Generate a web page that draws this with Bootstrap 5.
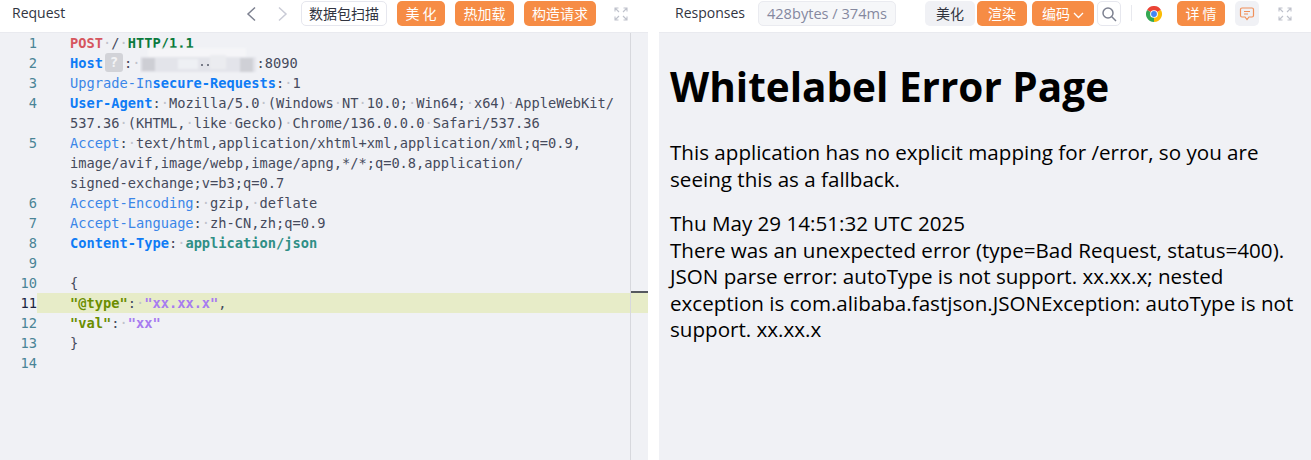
<!DOCTYPE html>
<html lang="zh-CN">
<head>
<meta charset="utf-8">
<title>Request</title>
<link href="https://cdn.jsdelivr.net/npm/bootstrap@5.3.0/dist/css/bootstrap.min.css" rel="stylesheet">
<style>
html,body{height:460px;overflow:hidden;background:#fff}
body{font-family:"Noto Sans","Noto Sans CJK SC",sans-serif;color:#2c3040}
.shell{height:460px}
.pane-l{width:648px;flex:none}
.pane-r{width:652px;flex:none;margin-left:11px}
.head-bar{height:33px;padding-top:1px;background:#fff;font-size:14px;border-bottom:1px solid #e9eaef}
.head-title{font-family:"Open Sans","Noto Sans CJK SC",sans-serif;font-size:14px;line-height:24px;color:#31343f}
.tbtn{height:25px;line-height:23px;border-radius:5px;font-size:14px;border:1px solid transparent;white-space:nowrap;font-family:"Noto Sans CJK SC",sans-serif;text-align:center;flex:none}
.tbtn-o{background:#f68c45;color:#fff}
.tbtn-w{background:#fff;border-color:#e6e7ee;color:#31343f}
.tbtn-g{background:#f0f1f5;color:#31343f}
.w86{width:86px}.w48{width:48px}.w59{width:59px}.w72{width:72px}.w50{width:50px}.w62{width:62px}
.gl10{margin-left:10px}.gl2{margin-left:2px}.gl5{margin-left:5px}.gl3{margin-left:3px}
.size-tag{height:25px;line-height:23px;border-radius:5px;border:1px solid #eaebf0;background:#f6f7f9;color:#85889f;font-size:14.6px;width:138px;text-align:center;margin-left:13px;font-family:"Open Sans",sans-serif}
.ico-btn{width:24px;height:25px;border-radius:5px;display:flex;align-items:center;justify-content:center;flex:none}
.ico-btn.tbtn-w{border:1px solid #e6e7ee}
.sep{width:1px;height:16px;background:#e8e9ee;margin:4px 14px 0 10px;flex:none}
.nav-a{margin-top:5px;flex:none}
.nav-prev{margin-right:19px}
.nav-next{margin-right:13px}
.chrome{margin:5px 15px 0 0;flex:none}
.fs-ico{margin:6px 20px 0 18px;flex:none}
.fs-r{margin:6px 19px 0 19px;flex:none}
.ed{height:427px;background:#f0f1f5;font-family:"DejaVu Sans Mono",monospace;font-size:13.7px;line-height:20px;color:#454a5c}
.nums{width:37px;flex:none;text-align:right;color:#4a8496}
.code{padding-left:33px;flex:1;min-width:0}
.cl{height:20px;white-space:pre}
.rail{width:18px;flex:none;border-left:1px solid #d7d8dd;position:relative}
.rail i{position:absolute;left:0;right:0;top:258px;height:2px;background:#55585f}
.hl{background:#e7ecc8;margin-left:-33px;padding-left:33px;margin-right:-18px;position:relative}
.nums .cur{color:#1c2440}
.d{color:#c0c2cb}
.k{color:#0f7cf5;font-weight:700}
.kl{color:#3a86e8}
.m{color:#d6565f;font-weight:700}
.h{color:#0a7a3c;font-weight:700}
.j{color:#2f8f86;font-weight:700}
.jk{color:#6b8e00;font-weight:700}
.js{color:#a77cf0;font-weight:700}
.qm{display:inline-block;width:18px;height:19px;line-height:19px;border-radius:3px;background:#d2d3d8;color:#f3f3f5;text-align:center;vertical-align:top;margin:0 1px 0 2px;font-weight:700;font-size:14px}
.blurred{display:inline-block;width:116px;height:20px;vertical-align:top;position:relative}
.blurred svg{position:absolute;left:0;top:-6px}
.body-r{height:427px;background:#f0f1f5;padding:27px 12px 0 11px;color:#000;font-family:"Open Sans","Noto Sans",sans-serif;overflow:hidden}
.body-r h1{font-family:"Open Sans",sans-serif;font-size:40.500px;font-weight:700;line-height:54px;margin:0 0 25px}
.body-r p{font-size:20.600px;line-height:26.500px;margin:0 0 18px}
</style>
</head>
<body>
<div class="shell d-flex">
  <section class="pane-l">
    <div class="head-bar d-flex align-items-start">
      <span class="head-title ms-2 ps-1">Request</span>
      <div class="ms-auto d-flex align-items-start">
        <svg class="nav-a nav-prev" width="12" height="16" viewBox="0 0 12 16"><path d="M10 1.500 3 8l7 6.500" fill="none" stroke="#7d8190" stroke-width="1.500"/></svg>
        <svg class="nav-a nav-next" width="12" height="16" viewBox="0 0 12 16"><path d="M3 1.500 10 8l-7 6.500" fill="none" stroke="#c9cbd6" stroke-width="1.500"/></svg>
        <span class="tbtn tbtn-w w86">数据包扫描</span>
        <span class="tbtn tbtn-o w48 gl10">美 化</span>
        <span class="tbtn tbtn-o w59 gl10">热加载</span>
        <span class="tbtn tbtn-o w72 gl10">构造请求</span>
        <svg class="fs-ico" width="14" height="14" viewBox="0 0 14 14" fill="none" stroke="#bfc2cc" stroke-width="1.100"><path d="M1 4.500V1h3.500M1 1l4 4M9.500 1H13v3.500M13 1 9 5M1 9.500V13h3.500M1 13l4-4M9.500 13H13V9.500M13 13 9 9"/></svg>
      </div>
    </div>
    <div class="ed d-flex">
      <div class="nums">
        <div>1</div><div>2</div><div>3</div><div>4</div><div>&nbsp;</div><div>5</div><div>&nbsp;</div><div>&nbsp;</div><div>6</div><div>7</div><div>8</div><div>9</div><div>10</div><div class="cur">11</div><div>12</div><div>13</div><div>14</div>
      </div>
      <div class="code">
        <div class="cl"><span class="m">POST</span><span class="d">·</span>/<span class="d">·</span><span class="h">HTTP/1.1</span></div>
        <div class="cl"><span class="k">Host</span><span class="qm">?</span>:<span class="d">·</span><span class="blurred"><svg width="118" height="28" viewBox="0 0 118 28"><defs><filter id="bl" x="-10%" y="-30%" width="120%" height="160%"><feGaussianBlur stdDeviation="1"/></filter></defs><g filter="url(#bl)"><rect x="0" y="10" width="116" height="15" fill="#e3e4ea"/><rect x="8" y="1" width="98" height="9" fill="#f5f5f8"/><rect x="2" y="11" width="13" height="13" fill="#cdced4"/><rect x="38" y="12" width="20" height="10" fill="#eef0f4"/><rect x="70" y="8" width="16" height="14" fill="#ebecf0"/><rect x="100" y="11" width="13" height="14" fill="#cfd0d6"/></g><circle cx="62" cy="18" r="1" fill="#555a68"/><circle cx="68" cy="18" r="1" fill="#555a68"/></svg></span>:8090</div>
        <div class="cl"><span class="kl">Upgrade-In</span><span class="k">secure-Requests</span>:<span class="d">·</span>1</div>
        <div class="cl"><span class="k">User-Agent</span>:<span class="d">·</span>Mozilla/5.0<span class="d">·</span>(Windows<span class="d">·</span>NT<span class="d">·</span>10.0;<span class="d">·</span>Win64;<span class="d">·</span>x64)<span class="d">·</span>AppleWebKit/</div>
        <div class="cl">537.36<span class="d">·</span>(KHTML,<span class="d">·</span>like<span class="d">·</span>Gecko)<span class="d">·</span>Chrome/136.0.0.0<span class="d">·</span>Safari/537.36</div>
        <div class="cl"><span class="kl">Accept</span>:<span class="d">·</span>text/html,application/xhtml+xml,application/xml;q=0.9,</div>
        <div class="cl">image/avif,image/webp,image/apng,*/*;q=0.8,application/</div>
        <div class="cl">signed-exchange;v=b3;q=0.7</div>
        <div class="cl"><span class="kl">Accept-Encoding</span>:<span class="d">·</span>gzip,<span class="d">·</span>deflate</div>
        <div class="cl"><span class="kl">Accept-Language</span>:<span class="d">·</span>zh-CN,zh;q=0.9</div>
        <div class="cl"><span class="k">Content-Type</span>:<span class="d">·</span><span class="j">application/json</span></div>
        <div class="cl"></div>
        <div class="cl">{</div>
        <div class="cl hl"><span class="jk">"@type"</span>:<span class="d">·</span><span class="js">"xx.xx.x"</span>,</div>
        <div class="cl"><span class="jk">"val"</span>:<span class="d">·</span><span class="js">"xx"</span></div>
        <div class="cl">}</div>
        <div class="cl"></div>
      </div>
      <div class="rail"><i></i></div>
    </div>
  </section>
  <section class="pane-r">
    <div class="head-bar d-flex align-items-start">
      <span class="head-title ms-3">Responses</span>
      <span class="size-tag">428bytes / 374ms</span>
      <div class="ms-auto d-flex align-items-start">
        <span class="tbtn tbtn-g w50">美化</span>
        <span class="tbtn tbtn-o w50 gl2">渲染</span>
        <span class="tbtn tbtn-o w62 gl5">编码 <svg width="11" height="7" viewBox="0 0 11 7"><path d="M1 1l4.500 4.500L10 1" fill="none" stroke="#fff" stroke-width="1.300"/></svg></span>
        <span class="ico-btn tbtn-w gl3"><svg width="16" height="16" viewBox="0 0 16 16" fill="none" stroke="#7d8190" stroke-width="1.500"><circle cx="7" cy="7" r="5"/><path d="M10.800 10.800 15 15"/></svg></span>
        <span class="sep"></span>
        <svg class="chrome" width="16" height="16" viewBox="0 0 24 24"><path d="M12 12 1.600 6A12 12 0 0 1 22.400 6Z" fill="#ea4335"/><path d="M12 12 22.400 6A12 12 0 0 1 12 24Z" fill="#fbbc05"/><path d="M12 12 12 24A12 12 0 0 1 1.600 6Z" fill="#34a853"/><circle cx="12" cy="12" r="5.800" fill="#fff"/><circle cx="12" cy="12" r="4.400" fill="#4285f4"/></svg>
        <span class="tbtn tbtn-o w48">详 情</span>
        <span class="ico-btn tbtn-g gl10"><svg width="16" height="16" viewBox="0 0 16 16" fill="none" stroke="#f0905a" stroke-width="1.200"><path d="M3 2h10a1.500 1.500 0 0 1 1.500 1.500v6A1.500 1.500 0 0 1 13 11h-3l-2 2.500L6 11H3a1.500 1.500 0 0 1-1.500-1.500v-6A1.500 1.500 0 0 1 3 2z"/><path d="M5 5.500h6M5 8h4"/></svg></span>
        <svg class="fs-r" width="14" height="14" viewBox="0 0 14 14" fill="none" stroke="#bfc2cc" stroke-width="1.100"><path d="M1 4.500V1h3.500M1 1l4 4M9.500 1H13v3.500M13 1 9 5M1 9.500V13h3.500M1 13l4-4M9.500 13H13V9.500M13 13 9 9"/></svg>
      </div>
    </div>
    <div class="body-r">
      <h1>Whitelabel Error Page</h1>
      <p>This application has no explicit mapping for /error, so you are seeing this as a fallback.</p>
      <p>Thu May 29 14:51:32 UTC 2025<br>There was an unexpected error (type=Bad Request, status=400).<br>JSON parse error: autoType is not support. xx.xx.x; nested exception is com.alibaba.fastjson.JSONException: autoType is not support. xx.xx.x</p>
    </div>
  </section>
</div>
<script src="https://cdn.jsdelivr.net/npm/bootstrap@5.3.0/dist/js/bootstrap.bundle.min.js"></script>
</body>
</html>
